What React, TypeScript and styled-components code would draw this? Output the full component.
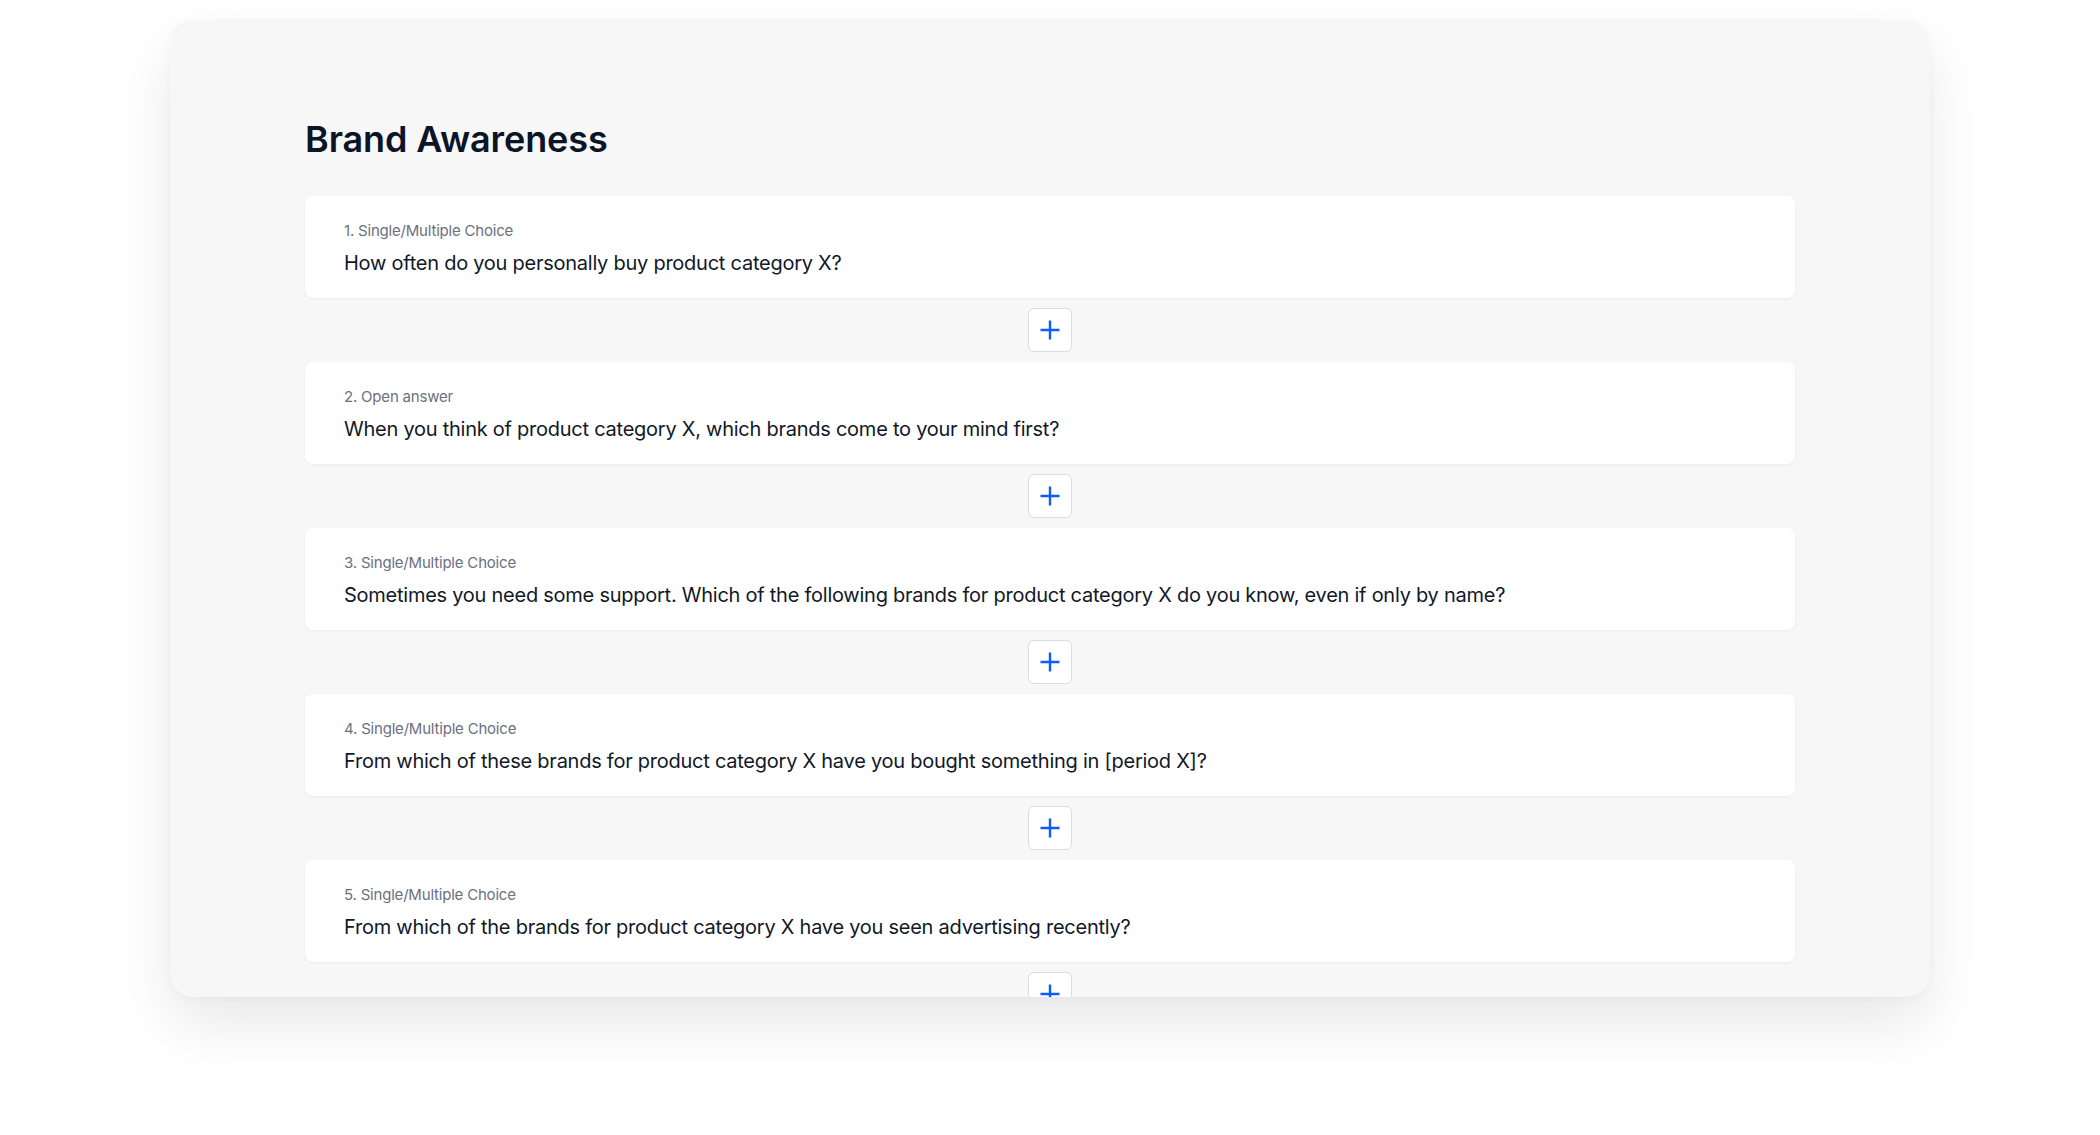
import React from "react";
import styled, { createGlobalStyle } from "styled-components";

const questions = [
  {
    kind: "Single/Multiple Choice",
    text: "How often do you personally buy product category X?",
  },
  {
    kind: "Open answer",
    text: "When you think of product category X, which brands come to your mind first?",
  },
  {
    kind: "Single/Multiple Choice",
    text: "Sometimes you need some support. Which of the following brands for product category X do you know, even if only by name?",
  },
  {
    kind: "Single/Multiple Choice",
    text: "From which of these brands for product category X have you bought something in [period X]?",
  },
  {
    kind: "Single/Multiple Choice",
    text: "From which of the brands for product category X have you seen advertising recently?",
  },
];

const App: React.FC = () => {
  return (
    <>
      <GlobalStyle />
      <Page>
        <Panel>
          <Title>Brand Awareness</Title>
          <List>
            {questions.map((q, i) => (
              <React.Fragment key={i}>
                <Card>
                  <Kind>
                    {i + 1}. {q.kind}
                  </Kind>
                  <Question>{q.text}</Question>
                </Card>
                <AddButton aria-label="Add question">
                  <svg width="20" height="20" viewBox="0 0 20 20" fill="none">
                    <path
                      d="M10 0.5v19M0.5 10h19"
                      stroke="#0a5cff"
                      strokeWidth="2.4"
                    />
                  </svg>
                </AddButton>
              </React.Fragment>
            ))}
          </List>
        </Panel>
      </Page>
    </>
  );
};

export default App;

const GlobalStyle = createGlobalStyle`
  html, body {
    margin: 0;
    padding: 0;
    background: #ffffff;
    font-family: Inter, "Noto Sans", sans-serif;
  }
  * {
    box-sizing: border-box;
  }
`;

const Page = styled.div`
  width: 2100px;
  height: 1135px;
  display: flex;
  justify-content: center;
  padding-top: 20px;
  overflow: hidden;
`;

const Panel = styled.div`
  width: 1760px;
  height: 977px;
  background: #f7f7f7;
  border-radius: 24px;
  padding: 98px 135px 0;
  overflow: hidden;
  box-shadow: 0 28px 60px rgba(0, 0, 0, 0.09), 0 2px 10px rgba(0, 0, 0, 0.03);
`;

const Title = styled.h1`
  margin: 0 0 35px;
  font-size: 36px;
  line-height: 43px;
  font-weight: 600;
  color: #0b1527;
  letter-spacing: -0.1px;
`;

const List = styled.div`
  display: flex;
  flex-direction: column;
  align-items: center;
`;

const Card = styled.div`
  width: 100%;
  height: 102px;
  background: #ffffff;
  border-radius: 8px;
  padding: 23px 39px 0;
  box-shadow: 0 1px 3px rgba(0, 0, 0, 0.05);
`;

const Kind = styled.div`
  font-size: 15px;
  line-height: 24px;
  color: #6b7080;
  letter-spacing: -0.2px;
`;

const Question = styled.div`
  margin-top: 6px;
  font-size: 20px;
  line-height: 28px;
  color: #111827;
  letter-spacing: -0.25px;
`;

const AddButton = styled.button`
  width: 44px;
  height: 44px;
  margin: 10px 0;
  padding: 0;
  display: flex;
  align-items: center;
  justify-content: center;
  background: #ffffff;
  border: 1.5px solid #dcdde3;
  border-radius: 6px;
  cursor: pointer;
`;
